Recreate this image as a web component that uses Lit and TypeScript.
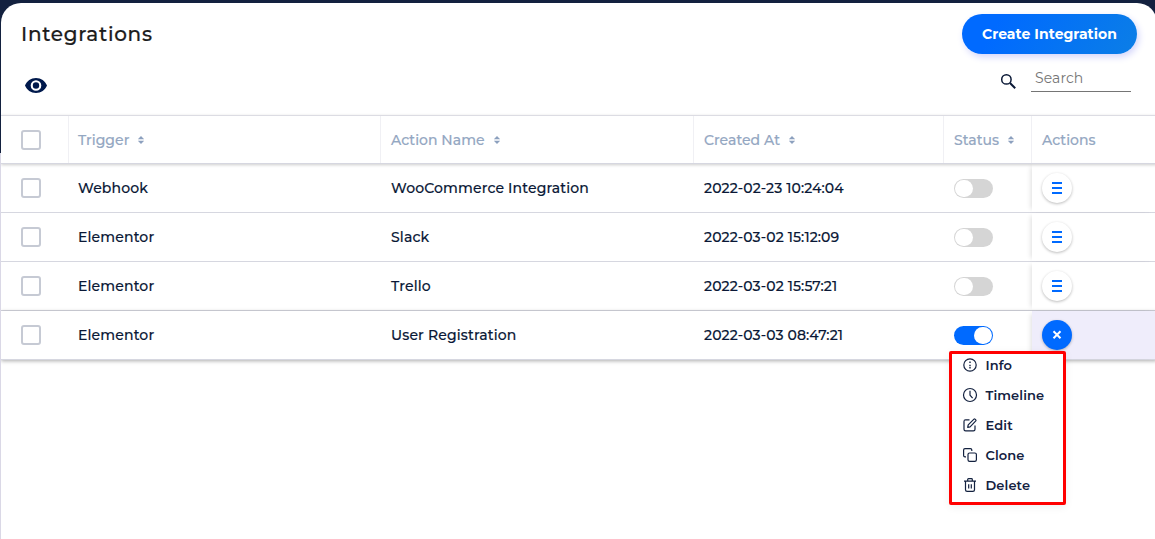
import { LitElement, html, svg, css } from "lit";
import { customElement } from "lit/decorators.js";
import { classMap } from "lit/directives/class-map.js";

interface Row { trigger: string; name: string; date: string; on: boolean }

const rows: Row[] = [
  { trigger: "Webhook", name: "WooCommerce Integration", date: "2022-02-23 10:24:04", on: false },
  { trigger: "Elementor", name: "Slack", date: "2022-03-02 15:12:09", on: false },
  { trigger: "Elementor", name: "Trello", date: "2022-03-02 15:57:21", on: false },
  { trigger: "Elementor", name: "User Registration", date: "2022-03-03 08:47:21", on: true },
];
const heads = ["Trigger", "Action Name", "Created At", "Status"];

const menu: { label: string; icon: unknown }[] = [
  { label: "Info", icon: svg`<circle cx="7" cy="7" r="6.2"/><path d="M7 3.4v1.7M7 6.7v1.2M7 8.8v1.8" stroke-width="1.4"/>` },
  { label: "Timeline", icon: svg`<circle cx="7" cy="7" r="6.5"/><path d="M7 2.8v4.4l2.6 3"/>` },
  { label: "Edit", icon: svg`<path d="M6.5 1.8H2.6Q1 1.8 1 3.4v7.8q0 1.6 1.6 1.6h7.8q1.6 0 1.6-1.6V7.5M4.7 9.3l.5-2.4L11 1.1q.5-.4 1 0l.8.8q.5.5 0 1L7.1 8.8Z"/>` },
  { label: "Clone", icon: svg`<rect x="5" y="5" width="8.4" height="8.4" rx="1.6"/><path d="M3 8.8H2Q.6 8.8.6 7.4V2Q.6.6 2 .6h5.4Q8.8.6 8.8 2v1"/>` },
  { label: "Delete", icon: svg`<path d="M1 3.2h12M4.7 3V1.4q0-.8.8-.8h3q.8 0 .8.8V3M2.500 3.400v8.400q0 1.600 1.600 1.600h5.800q1.600 0 1.600-1.600V3.400M5.700 6.200v4.400M8.300 6.200v4.400"/>` },
];

@customElement("app-root")
export class AppRoot extends LitElement {
  static styles = css`
    :host { display: block; box-sizing: border-box; height: 539px; padding: 3px 0 0 1px; overflow: hidden;
      background: linear-gradient(#13213f 153px, #dad8e6 153px);
      font: 500 14px/20px Montserrat, Inter, sans-serif; color: #0a1836; }
    .card { box-sizing: border-box; height: 536px; margin-right: -2px; background: #fff; border-radius: 20px 20px 0 0; overflow: hidden; }
    .top { display: flex; justify-content: space-between; padding: 11px 20px 0 20px; height: 40px; }
    h1 { margin: 0; font-size: 20px; line-height: 40px; font-weight: 500; letter-spacing: 0.7px; color: #1c1c1c; -webkit-text-stroke: 0.2px #1c1c1c; }
    .create { width: 175px; height: 40px; border: 0; border-radius: 20px; padding: 0; font: 700 14px/40px Montserrat, Inter, sans-serif; letter-spacing: 0.05px;
      color: #fff; background: linear-gradient(120deg, #006aff 20%, #0b7ee6); box-shadow: 2px 3px 7px #d3d5fb; }
    .tools { display: flex; justify-content: space-between; height: 61px; padding: 0 26px 0 22px; }
    .eye { margin-top: 16px; height: 31px; }
    .search { display: flex; padding-top: 11px; }
    .search svg { margin: 8px 13px 0 0; }
    .field { box-sizing: border-box; width: 100px; height: 27px; border-bottom: 1px solid #757575; padding-left: 4px; line-height: 27px; font-weight: 400; letter-spacing: 0.1px; color: #757575; }
    .row { position: relative; display: grid; grid-template-columns: 67px 312px 313px 250px 88px 1fr; height: 48px; border-bottom: 1px solid #d6d7e0; letter-spacing: 0.15px; -webkit-text-stroke: 0.15px currentColor; }
    .row > div { display: flex; align-items: center; padding-left: 11px; }
    .row > .pick { padding-left: 20px; }
    .row > .pick + div { padding-left: 10px; }
    .head { height: 47px; border-top: 1px solid #dcdce3; color: #94a7c2; box-shadow: 0 1px 3px #0003; z-index: 2; letter-spacing: 0.03px; }
    .row.head > div + div { border-left: 1px solid #f0f0f4; padding-left: 10px; }
    .row.head > .pick + div { padding-left: 9px; }
    .date { letter-spacing: 0.1px; }
    .last { box-shadow: 0 1px 4px #0005; }
    .box { box-sizing: border-box; width: 20px; height: 20px; border: 2px solid #c6cad4; border-radius: 3px; }
    .sort { margin: 1px 0 0 8px; }
    .switch { box-sizing: border-box; width: 39px; height: 19px; padding: 1px; border-radius: 10px; background: #d5d5d5; display: flex; }
    .switch i { width: 18px; height: 17px; border-radius: 9px; background: #fff; }
    .switch.on { background: #006aff; justify-content: flex-end; }
    .row > .act { margin-left: 1px; box-shadow: -4px 0 5px -3px #0002; padding-left: 10px; }
    .row > .act.open { background: #efedfb; }
    .dot { width: 30px; height: 30px; border-radius: 50%; display: grid; place-items: center; background: #fff; box-shadow: 0 1px 3px #0004; }
    .open .dot { background: #006aff; }
    .menu { position: absolute; z-index: 3; left: 949px; top: 351px; box-sizing: border-box; width: 117px; height: 154px; border: 3px solid #ff0000; border-radius: 2px; background: #fff; padding: 0 0 0 11px; box-shadow: 0 2px 8px #0001; }
    .item { display: flex; align-items: center; gap: 8.5px; height: 30px; font-size: 13px; font-weight: 600; letter-spacing: 0.1px; color: #13213f; }
    .menu .item:first-child { margin-top: -4px; }
    .item svg { fill: none; stroke: #13213f; stroke-width: 1.2; stroke-linejoin: round; overflow: visible; }
  `;

  render() {
    return html`
      <div class="card">
        <div class="top"><h1>Integrations</h1><button class="create">Create Integration</button></div>
        <div class="tools">
          <svg class="eye" width="26" height="31" viewBox="0 0 26 31"><path transform="translate(0 .5)" fill="#00194c" fill-rule="evenodd" d="M13 7.5C8 7.5 3.7 10.6 2 15c1.700 4.400 6 7.500 11 7.500S22.300 19.400 24 15C22.300 10.600 18 7.500 13 7.500Zm0 12.800a5.300 5.300 0 1 1 0-10.600 5.300 5.300 0 0 1 0 10.600Zm0-8.500a3.200 3.200 0 1 0 0 6.400 3.200 3.200 0 0 0 0-6.400Z"/></svg>
          <div class="search">
            <svg width="18" height="18" viewBox="0 0 18 18" fill="none" stroke="#0a1836"><circle cx="6.4" cy="6.4" r="4.7" stroke-width="1.5"/><path d="m10 10 5.2 5.2" stroke-width="2"/></svg>
            <div class="field">Search</div>
          </div>
        </div>
        <div class="row head">
          <div class="pick"><span class="box"></span></div>
          ${heads.map((h) => html`<div>${h}<svg class="sort" width="8" height="8" viewBox="0 0 8 8" fill="#8ca0be"><path d="M4 0 7.200 3.300H.8ZM4 8 .8 4.700h6.400Z"/></svg></div>`)}
          <div>Actions</div>
        </div>
        ${rows.map((r, i) => html`
          <div class=${classMap({ row: true, last: i === 3 })}>
            <div class="pick"><span class="box"></span></div>
            <div>${r.trigger}</div><div>${r.name}</div><div class="date">${r.date}</div>
            <div><span class=${classMap({ switch: true, on: r.on })}><i></i></span></div>
            <div class=${classMap({ act: true, open: r.on })}><span class="dot">
              ${r.on
                ? html`<svg width="10" height="10" viewBox="0 0 10 10" stroke="#fff" stroke-width="2"><path d="m1.500 1.300 7 7m0-7-7 7"/></svg>`
                : html`<svg width="10" height="12" viewBox="0 0 10 12" fill="#006aff"><path d="M0 0h10v2H0ZM0 5h10v2H0ZM0 10h10v2H0Z"/></svg>`}
            </span></div>
          </div>`)}
        <div class="menu">
          ${menu.map((m) => html`<div class="item"><svg width="14" height="14" viewBox="0 0 14 14">${m.icon}</svg><span>${m.label}</span></div>`)}
        </div>
      </div>`;
  }
}
